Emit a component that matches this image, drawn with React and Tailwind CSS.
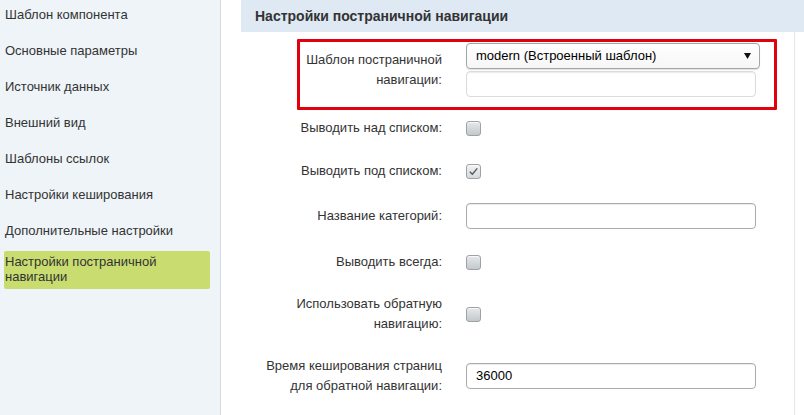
import React from "react";

const menu = [
  "Шаблон компонента",
  "Основные параметры",
  "Источник данных",
  "Внешний вид",
  "Шаблоны ссылок",
  "Настройки кеширования",
  "Дополнительные настройки",
];

function Checkbox({ checked }) {
  return (
    <div
      className={
        "w-[15px] h-[15px] rounded-[3px] border border-[#9ca2a6] flex items-center justify-center shadow-[inset_0_1px_0_rgba(255,255,255,0.7)] " +
        (checked
          ? "bg-gradient-to-b from-[#f1f3f4] to-[#d5d9db]"
          : "bg-gradient-to-b from-[#e6e9eb] to-[#c3c8cb]")
      }
    >
      {checked && (
        <svg width="11" height="11" viewBox="0 0 11 11">
          <path d="M1.8 5.8 L4.3 8.2 L9.3 2.4" fill="none" stroke="#555" strokeWidth="1.4" />
        </svg>
      )}
    </div>
  );
}

function TextInput({ value, light }) {
  return (
    <div
      className={
        "w-[290px] h-[26px] rounded-[4px] bg-white px-[9px] flex items-center text-[13px] text-black shadow-[inset_0_1px_1px_rgba(0,0,0,0.08)] border " +
        (light ? "border-[#d9dcde]" : "border-[#a8acaf]")
      }
    >
      {value}
    </div>
  );
}

function Row({ label, height, mt, children }) {
  return (
    <div className={`flex items-center ${height} ${mt}`}>
      <div className="w-[188px] ml-[13px] text-right leading-[20px] text-[#333]">{label}</div>
      <div className="ml-[24px] flex flex-col gap-[2px]">{children}</div>
    </div>
  );
}

export default function App() {
  return (
    <div className="flex w-[804px] h-[415px] overflow-hidden bg-white text-[13px] text-[#333] font-['Liberation_Sans',Arial,sans-serif]">
      <aside className="w-[221px] shrink-0 bg-[#eef4f8] border-r border-[#d5dce1] pl-[4px] pr-[10px] flex flex-col">
        {menu.map((item, i) => (
          <div key={i} className={`pl-[1px] py-[7px] leading-[15px] ${i === 0 ? "" : "mt-[7px]"}`}>
            {item}
          </div>
        ))}
        <div className="mt-[6px] pl-[1px] pt-[3px] pb-[5px] leading-[15px] bg-[#c8dc70] rounded-[2px]">
          Настройки постраничной
          <br />
          навигации
        </div>
      </aside>

      <main className="flex-1 pl-[20px] flex flex-col">
        <div className="h-[32px] shrink-0 bg-[#dee9f4] pl-[14px] flex items-center font-bold text-[14px] text-[#333]">
          Настройки постраничной навигации
        </div>

        <div className="relative flex-1 mr-[9px] border-r border-[#e3e7ea] pt-[11px]">
          <Row label="Шаблон постраничной навигации:" height="h-[54px]" mt="">
            <div className="w-[294px] h-[26px] rounded-[4px] border border-[#a2a6a9] bg-gradient-to-b from-white to-[#f6f6f6] shadow-[0_1px_1px_rgba(0,0,0,0.12)] pl-[9px] pr-[8px] flex items-center justify-between text-black">
              <span>modern (Встроенный шаблон)</span>
              <svg width="7" height="6" viewBox="0 0 7 6">
                <path d="M0 0 H7 L3.5 6 Z" fill="#111" />
              </svg>
            </div>
            <TextInput value="" light />
          </Row>

          <Row label="Выводить над списком:" height="h-[30px]" mt="mt-[16px]">
            <Checkbox />
          </Row>

          <Row label="Выводить под списком:" height="h-[30px]" mt="mt-[13px]">
            <Checkbox checked />
          </Row>

          <Row label="Название категорий:" height="h-[30px]" mt="mt-[15px]">
            <TextInput value="" />
          </Row>

          <Row label="Выводить всегда:" height="h-[30px]" mt="mt-[16px]">
            <Checkbox />
          </Row>

          <Row label="Использовать обратную навигацию:" height="h-[40px]" mt="mt-[17px]">
            <Checkbox />
          </Row>

          <Row label="Время кеширования страниц для обратной навигации:" height="h-[40px]" mt="mt-[22px]">
            <TextInput value="36000" />
          </Row>

          <div className="absolute left-[56px] top-[7px] w-[480px] h-[71px] border-[3px] border-[#e2000f] rounded-[1px] pointer-events-none" />
        </div>
      </main>
    </div>
  );
}
